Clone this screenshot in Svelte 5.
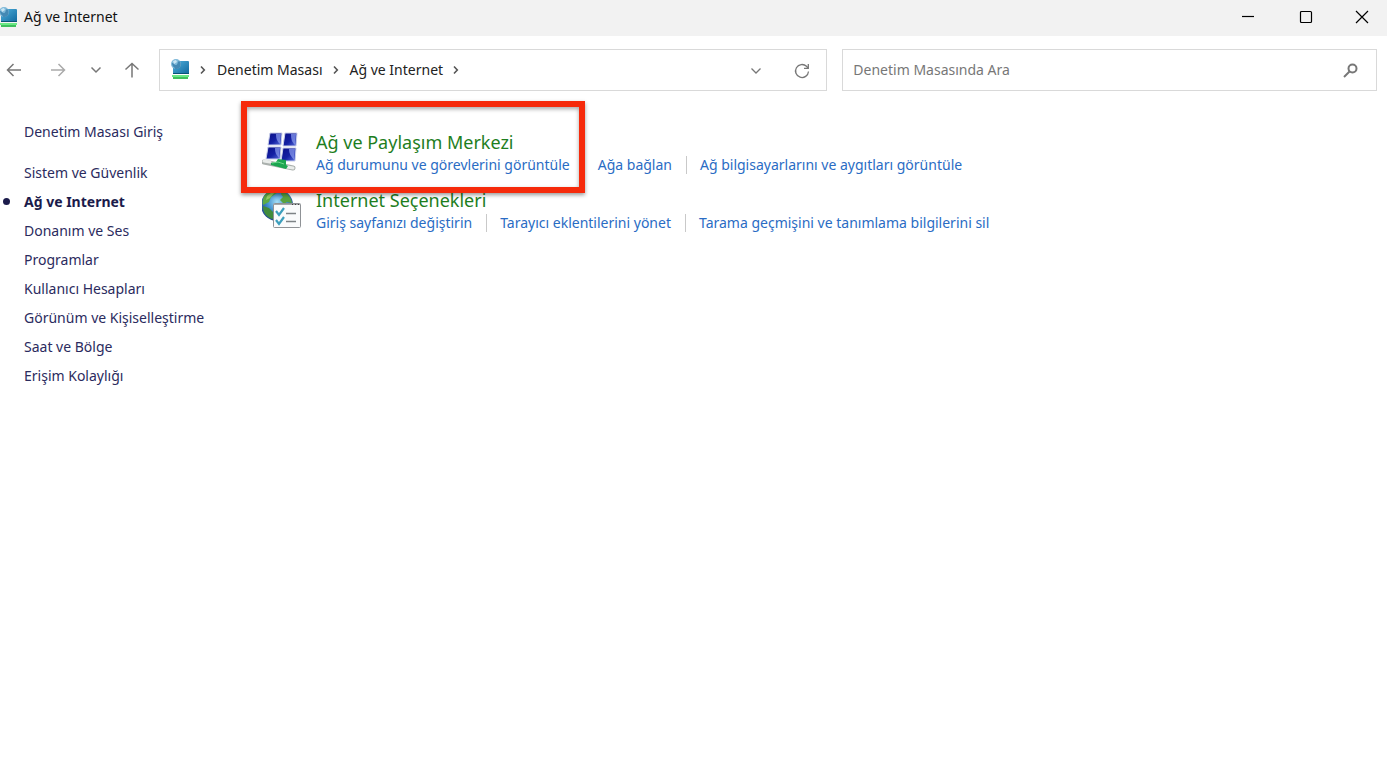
<script>
  let query = $state('');
  let current = $state('Ağ ve Internet');

  const sections = [
    'Sistem ve Güvenlik',
    'Ağ ve Internet',
    'Donanım ve Ses',
    'Programlar',
    'Kullanıcı Hesapları',
    'Görünüm ve Kişiselleştirme',
    'Saat ve Bölge',
    'Erişim Kolaylığı'
  ];

  const categories = [
    {
      title: 'Ağ ve Paylaşım Merkezi',
      icon: 'network',
      highlighted: true,
      tasks: [
        'Ağ durumunu ve görevlerini görüntüle',
        'Ağa bağlan',
        'Ağ bilgisayarlarını ve aygıtları görüntüle'
      ]
    },
    {
      title: 'Internet Seçenekleri',
      icon: 'globe',
      highlighted: false,
      tasks: [
        'Giriş sayfanızı değiştirin',
        'Tarayıcı eklentilerini yönet',
        'Tarama geçmişini ve tanımlama bilgilerini sil'
      ]
    }
  ];
</script>

<svelte:head>
  <title>Ağ ve Internet</title>
</svelte:head>

{#snippet panelIcon()}
  <svg class="panel-icon" width="20" height="22" viewBox="0 0 20 22" aria-hidden="true">
    <defs>
      <linearGradient id="screen" x1="0" y1="0" x2="1" y2="1">
        <stop offset="0" stop-color="#4fb0dc" />
        <stop offset="1" stop-color="#12699f" />
      </linearGradient>
    </defs>
    <rect x="3" y="2" width="16" height="13" rx="1" fill="url(#screen)" />
    <path d="M3 14h16v1H3z" fill="#0a5277" />
    <path d="M2 16h17v2H2z" fill="#6be886" />
    <path d="M3 18h15v2H3z" fill="#3fc05d" />
    <circle cx="6" cy="5" r="5" fill="#7fb9d9" />
    <path d="M2 4c2 0 2 2 4 2s1-3 3-4c2 1 2 4 1 6s-3 2-5 2c0-2-3-2-3-6z" fill="#4489b4" />
    <path d="M3 2l3-1 1 2-3 2z" fill="#c9e5f3" />
  </svg>
{/snippet}

{#snippet crumbArrow()}
  <svg class="crumb-arrow" width="7" height="10" viewBox="0 0 7 10" aria-hidden="true">
    <path d="M2 1.500L5.300 5 2 8.500" />
  </svg>
{/snippet}

<div class="window">
  <header class="titlebar">
    {@render panelIcon()}
    <h1>Ağ ve Internet</h1>
    <div class="window-controls">
      <button aria-label="Simge durumuna küçült">
        <svg width="14" height="14" viewBox="0 0 14 14"><path d="M1 6.500h12" /></svg>
      </button>
      <button aria-label="Ekranı kapla">
        <svg width="14" height="14" viewBox="0 0 14 14"><rect x="1.500" y="1.500" width="11" height="11" rx="1" /></svg>
      </button>
      <button aria-label="Kapat">
        <svg width="14" height="14" viewBox="0 0 14 14"><path d="M1 1l12 12M13 1L1 13" /></svg>
      </button>
    </div>
  </header>

  <div class="toolbar">
    <nav class="history" aria-label="Gezinti">
      <button aria-label="Geri">
        <svg width="16" height="16" viewBox="0 0 16 16"><path d="M15 8H1.500M7.500 2L1.500 8l6 6" /></svg>
      </button>
      <button class="forward" aria-label="İleri">
        <svg width="16" height="16" viewBox="0 0 16 16"><path d="M1 8h13.500M8.500 2l6 6-6 6" /></svg>
      </button>
      <button class="recent" aria-label="Son konumlar">
        <svg width="12" height="16" viewBox="0 0 12 16"><path d="M1.500 5.500L6 10l4.500-4.500" /></svg>
      </button>
      <button class="up" aria-label="Yukarı">
        <svg width="16" height="16" viewBox="0 0 16 16"><path d="M8 15.500V1.500M1.500 7.500L8 1.500l6.500 6" /></svg>
      </button>
    </nav>

    <div class="fields">
      <div class="address">
        {@render panelIcon()}
        {@render crumbArrow()}
        <a href="#panel">Denetim Masası</a>
        {@render crumbArrow()}
        <a href="#network">Ağ ve Internet</a>
        {@render crumbArrow()}
        <div class="address-actions">
          <button aria-label="Önceki konumlar">
            <svg width="12" height="16" viewBox="0 0 12 16"><path d="M1.500 6.500L6 11l4.500-4.500" /></svg>
          </button>
          <button aria-label="Yenile">
            <svg width="16" height="18" viewBox="0 0 16 18">
              <path d="M14.500 10.500a6.500 6.500 0 1 1-2-5.200L14 7" />
              <path d="M14.300 3v4.300H10" />
            </svg>
          </button>
        </div>
      </div>

      <label class="search">
        <input type="text" placeholder="Denetim Masasında Ara" aria-label="Denetim Masasında Ara" bind:value={query} />
        <svg width="16" height="16" viewBox="0 0 16 16" aria-hidden="true">
          <circle cx="9.500" cy="6.500" r="4" />
          <path d="M6.500 9.500L1 15" />
        </svg>
      </label>
    </div>
  </div>

  <div class="content">
    <aside>
      <a class="home" href="#home">Denetim Masası Giriş</a>
      <ul>
        {#each sections as section}
          <li class:current={section === current}>
            <a href="#section" onclick={() => (current = section)}>{section}</a>
          </li>
        {/each}
      </ul>
    </aside>

    <main>
      {#each categories as category}
        <section class="category">
          {#if category.icon === 'network'}
            <svg width="40" height="42" viewBox="0 0 40 42" aria-hidden="true">
              <defs>
                <linearGradient id="tile" x1="0" y1="0" x2="1" y2="1">
                  <stop offset="0" stop-color="#0a0f86" />
                  <stop offset=".55" stop-color="#1420a4" />
                  <stop offset="1" stop-color="#5a70dc" />
                </linearGradient>
              </defs>
              <g stroke="#c9cfea" stroke-width="1" fill="url(#tile)">
                <path d="M8 2h12l-1 12H6z" />
                <path d="M23 2h12l-1 13H21z" />
                <path d="M6 16h13l-1 12H4z" />
                <path d="M21 17h13l-1 13H19z" />
              </g>
              <g fill="#8d9ff0" opacity=".7">
                <path d="M14 3h5l-1 10c-3-3-4-5-4-10z" />
                <path d="M29 3h5l-1 11c-3-3-4-5-4-11z" />
                <path d="M13 17h5l-1 10c-3-4-4-5-4-10z" />
                <path d="M27 18h6l-1 11c-3-4-5-6-5-11z" />
              </g>
              <path d="M2 31l29 6" stroke="#aab0ad" stroke-width="5" stroke-linecap="round" />
              <path d="M2 30l6 1M25 36l6 1" stroke="#e9ecea" stroke-width="3" stroke-linecap="round" />
              <path d="M9 32l5-1 2-3 8 1v5l2 1-2 3-15-4z" fill="#1ca550" />
              <path d="M10 32l6-1 6 2" stroke="#6ed98b" stroke-width="1" fill="none" />
            </svg>
          {:else}
            <svg width="40" height="42" viewBox="0 0 40 42" aria-hidden="true">
              <defs>
                <radialGradient id="ocean" cx=".5" cy=".4" r=".6">
                  <stop offset="0" stop-color="#a5def6" />
                  <stop offset=".5" stop-color="#4090cf" />
                  <stop offset="1" stop-color="#1d4189" />
                </radialGradient>
              </defs>
              <circle cx="15" cy="16" r="16" fill="url(#ocean)" />
              <path d="M2 7c3-4 7-6 12-6l1 3-6 4-2 5-4 2-2 1c-1-3 0-6 1-9z" fill="#5dab45" />
              <path d="M20 2c5 2 9 6 10 12l-5-1-3 2-4-4 3-3-2-3z" fill="#58a240" />
              <path d="M1 17l6 2 5 5-1 6C5 29 1 24 1 17z" fill="#418b3c" />
              <path d="M5 7l4-3 4-1-5 6-4 2z" fill="#9ace65" />
              <rect x="11.500" y="14.500" width="27" height="24" rx="1" fill="#fafbfc" stroke="#8f9296" />
              <path d="M12 15h26v1H12z" fill="#a5a8ab" />
              <path d="M30 15.500h1M33 15.500h1M36 15.500h1" stroke="#444" />
              <path d="M24 24.500h10M24 32.500h10" stroke="#7e8386" stroke-width="1.500" />
              <path d="M14 22l3 4 5-7M14 31l3 4 5-7" fill="none" stroke="#3d9fbd" stroke-width="2.200" />
            </svg>
          {/if}
          <div class="details">
            <h2><a href="#category">{category.title}</a></h2>
            <ul class="tasks">
              {#each category.tasks as task}
                <li><a href="#task">{task}</a></li>
              {/each}
            </ul>
          </div>
          {#if category.highlighted}
            <div class="highlight"></div>
          {/if}
        </section>
      {/each}
    </main>
  </div>
</div>

<style>
  :global(body) {
    margin: 0;
    background: #fff;
  }
  .window {
    min-height: 100vh;
    font-family: "Segoe UI", "Noto Sans", "Open Sans", sans-serif;
    font-size: 14px;
    line-height: 20px;
    color: #222;
    overflow-x: hidden;
  }
  h1, h2, ul {
    margin: 0;
    padding: 0;
    font-weight: 400;
  }
  ul {
    list-style: none;
  }
  a {
    color: inherit;
    text-decoration: none;
  }
  button {
    display: flex;
    align-items: center;
    justify-content: center;
    padding: 0;
    border: 0;
    background: none;
    color: inherit;
  }
  button svg, .crumb-arrow, .search svg {
    fill: none;
    stroke: currentColor;
  }
  svg {
    flex: none;
  }

  .titlebar {
    display: flex;
    align-items: center;
    height: 36px;
    background: #f2f2f2;
    color: #111;
  }
  .titlebar .panel-icon {
    margin-left: -2px;
  }
  .titlebar h1 {
    margin-left: 6px;
    padding-bottom: 2px;
    font-size: 14px;
  }
  .window-controls {
    display: flex;
    margin-left: auto;
    padding-bottom: 2px;
    color: #000;
  }
  .window-controls button {
    width: 58px;
    height: 32px;
  }
  .window-controls button:last-child {
    width: 52px;
    padding-left: 2px;
  }
  .window-controls svg {
    stroke-width: 1.2;
  }

  .toolbar {
    display: flex;
    align-items: center;
    padding: 13px 10px 0 6px;
    color: #777;
  }
  .history {
    display: flex;
    align-items: center;
    width: 134px;
    margin-right: 19px;
  }
  .history svg {
    stroke-width: 1.5;
  }
  .history .forward {
    margin-left: 28px;
    color: #aaa;
  }
  .history .recent {
    margin-left: 24px;
  }
  .history .up {
    margin-left: auto;
  }
  .fields {
    display: grid;
    grid-template-columns: 5fr 4fr;
    gap: 15px;
    flex: 1;
  }
  .address, .search {
    display: flex;
    align-items: center;
    box-sizing: border-box;
    height: 42px;
    border: 1px solid #d9d9d9;
    background: #fff;
  }
  .address {
    padding: 0 16px 0 10px;
    color: #222;
  }
  .crumb-arrow {
    margin: 0 11px 0 9px;
    color: #555;
    stroke-width: 1.6;
  }
  .address-actions {
    display: flex;
    gap: 32px;
    margin-left: auto;
    color: #777;
  }
  .address-actions svg {
    stroke-width: 1.3;
  }
  .search {
    padding: 0 17px 0 10px;
    color: #777;
  }
  .search input {
    flex: 1;
    min-width: 0;
    padding: 0;
    border: 0;
    outline: 0;
    background: none;
    font: inherit;
    color: #222;
  }
  .search input::placeholder {
    color: #777;
    opacity: 1;
  }
  .search svg {
    stroke-width: 2;
  }

  .content {
    display: flex;
    padding-top: 31px;
  }
  aside {
    width: 262px;
    flex: none;
    box-sizing: border-box;
    padding-left: 24px;
    color: #2b2b5e;
  }
  .home {
    display: block;
    margin-bottom: 16px;
  }
  aside li {
    display: flex;
    align-items: center;
    height: 29px;
  }
  .current {
    font-weight: 700;
    color: #1b1b4b;
  }
  .current::before {
    content: "";
    width: 7px;
    height: 7px;
    margin-left: -21px;
    margin-right: 14px;
    border-radius: 50%;
    background: #1b1b4b;
  }
  main {
    flex: 1;
    padding-top: 9px;
  }
  .category {
    position: relative;
    display: flex;
    gap: 14px;
    height: 58px;
  }
  .details {
    min-width: 0;
  }
  h2 {
    font-size: 18px;
    line-height: 23px;
    color: #1e7e1e;
  }
  .tasks {
    display: flex;
    color: #2a6cc4;
    line-height: 22px;
  }
  .tasks li {
    display: flex;
    align-items: center;
    white-space: nowrap;
  }
  .tasks li + li::before {
    content: "";
    width: 1px;
    height: 18px;
    margin: 0 13px 0 14px;
    background: #c9c9c9;
  }
  .highlight {
    position: absolute;
    z-index: 1;
    top: -30px;
    left: -21px;
    box-sizing: border-box;
    width: 344px;
    height: 92px;
    border: 6px solid #f62a0b;
    box-shadow: 0 2px 4px rgba(0, 0, 0, 0.4), inset 0 2px 4px rgba(0, 0, 0, 0.35);
    pointer-events: none;
  }
</style>
